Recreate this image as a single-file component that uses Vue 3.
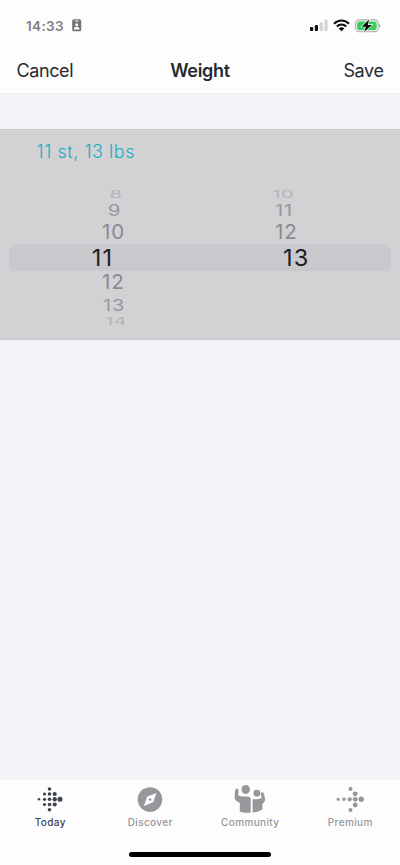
<script setup>
const wheels = [
  {
    name: 'stones',
    rows: [
      { value: 8, depth: 'd3', shift: 109.5 },
      { value: 9, depth: 'd2', shift: 108 },
      { value: 10, depth: 'd1', shift: 102 },
      { value: 11, depth: 'd0', shift: 91.7 },
      { value: 12, depth: 'd1', shift: 102 },
      { value: 13, depth: 'd2', shift: 103 },
      { value: 14, depth: 'd3', shift: 105 },
    ],
  },
  {
    name: 'pounds',
    rows: [
      { value: 10, depth: 'd3', shift: 72.5 },
      { value: 11, depth: 'd2', shift: 75 },
      { value: 12, depth: 'd1', shift: 75 },
      { value: 13, depth: 'd0', shift: 83 },
    ],
  },
]
const todayDots = [
  [12.5, 2, 1.8],
  [7.5, 7, 1.6], [12.5, 7, 1.8], [17.7, 7, 2.1],
  [2, 12.3, 1.3], [7.5, 12.3, 1.6], [12.5, 12.3, 1.8], [17.7, 12.3, 2.2], [23, 12.3, 2.5],
  [7.5, 17.5, 1.6], [12.5, 17.5, 1.8], [17.7, 17.5, 2.1],
  [12.5, 22.8, 1.8],
]
const premiumDots = [
  [15.5, 1.9, 2], [20.2, 6.8, 2.4],
  [3.2, 12.3, 1.6], [9, 12.3, 1.8], [14.7, 12.3, 2.1], [20.2, 12.3, 2.4], [26.2, 12.3, 2.7],
  [20.2, 18, 2.4], [15.5, 22.9, 2],
]
</script>

<template>
  <div class="screen">
    <div class="status">
      <span class="time">14:33</span>
      <svg class="badge" width="10" height="13" viewBox="0 0 10 13">
        <rect x="0.2" y="0.3" width="9" height="12" rx="1.6" fill="#737277" />
        <rect x="3" y="1.5" width="3.5" height="1" rx="0.5" fill="#fff" />
        <circle cx="4.7" cy="5.7" r="1.5" fill="#fff" />
        <path d="M1.8 10.6C1.8 8.6 3 7.8 4.7 7.8s2.9.8 2.9 2.8z" fill="#fff" />
      </svg>
      <div class="signals">
        <svg width="18" height="13" viewBox="0 0 18 13">
          <rect x="0" y="8" width="3.2" height="4" rx="0.9" fill="#111" />
          <rect x="4.8" y="6" width="3.2" height="6" rx="0.9" fill="#111" />
          <rect x="9.7" y="3.2" width="3.2" height="8.8" rx="0.9" fill="#d3d2d4" />
          <rect x="14.4" y="0.6" width="3.2" height="11.4" rx="0.9" fill="#d3d2d4" />
        </svg>
        <svg class="wifi" width="17" height="13" viewBox="0 0 17 13">
          <g fill="none" stroke="#0c0c0d" stroke-width="2.1">
            <path d="M1 4.7C5.2.4 11.8.4 16 4.7" />
            <path d="M3.8 7.5c2.7-2.6 6.7-2.6 9.4 0" />
          </g>
          <path d="M5.7 9.4c1.6-1.4 4-1.4 5.6 0L8.5 12.2z" fill="#0c0c0d" />
        </svg>
        <svg class="battery" width="27" height="14" viewBox="0 0 27 14">
          <rect x="0.6" y="0.9" width="22.6" height="11.8" rx="3.7" fill="#fff" stroke="#aaa8ad" stroke-width="1.1" />
          <rect x="2.1" y="2.4" width="19.6" height="8.8" rx="2.4" fill="#35cd5c" />
          <path d="M24.4 5v3.8c1.5-.7 1.5-3.1 0-3.8z" fill="#98969b" />
          <path d="M14.1.6L6.8 7.7h4l-1.6 5.4L17 5.9h-4.2z" fill="#080a08" stroke="#fff" stroke-width="1.2" paint-order="stroke" />
        </svg>
      </div>
    </div>

    <header class="nav">
      <button class="action cancel">Cancel</button>
      <h1>Weight</h1>
      <button class="action save">Save</button>
    </header>

    <main>
      <section class="panel">
        <p class="summary">11 st, 13 lbs</p>
        <div class="picker">
          <div class="band"></div>
          <div v-for="wheel in wheels" :key="wheel.name" class="wheel">
            <div v-for="row in wheel.rows" :key="row.value" class="row" :class="row.depth" :style="{ paddingLeft: row.shift + 'px' }">
              <span>{{ row.value }}</span>
            </div>
          </div>
        </div>
      </section>
    </main>

    <footer>
      <nav class="tabs">
        <div class="tab active">
          <svg width="26" height="26" viewBox="0 0 26 26" fill="currentColor">
            <circle v-for="(d, i) in todayDots" :key="i" :cx="d[0]" :cy="d[1]" :r="d[2]" />
          </svg>
          <span>Today</span>
        </div>
        <div class="tab">
          <svg width="26" height="26" viewBox="0 0 26 26">
            <circle cx="13" cy="12.5" r="12.3" fill="currentColor" />
            <path d="M19.5 6L16 15.3 6.8 18.9l3.5-9.3z" fill="#fff" />
            <circle cx="13.1" cy="12.5" r="1.3" fill="currentColor" />
          </svg>
          <span>Discover</span>
        </div>
        <div class="tab">
          <svg class="people" width="32" height="30" viewBox="0 0 32 30" fill="currentColor">
            <ellipse cx="11.7" cy="5.5" rx="4.2" ry="4.5" />
            <circle cx="22.9" cy="9.2" r="3.4" />
            <path d="M2.2 4.9c1.2-.4 2.4.2 2.3 1.4l-.4 5c1.5 1 3.3 1.2 6.2 1.2h3.2c2 0 3.2.9 3.2 2.8v13.1c-3.8.8-8.2.5-10.9-.9V18.8C2.6 17.5.5 15.8.6 12.9.7 9.8 1 7 1.4 5.7q.2-.6.8-.8z" />
            <path d="M18.6 15.2c2.8.3 6.8.1 9-1.5l-.8-3.9c-.3-1.6 2.1-2.3 2.8-.9l1.4 5.4c.5 2.2-.8 4.4-2.6 5.8v5.1c-2.1 1.8-5.8 3.2-9.8 3.2z" />
          </svg>
          <span>Community</span>
        </div>
        <div class="tab">
          <svg width="30" height="26" viewBox="0 0 30 26" fill="currentColor">
            <circle v-for="(d, i) in premiumDots" :key="i" :cx="d[0]" :cy="d[1]" :r="d[2]" />
          </svg>
          <span>Premium</span>
        </div>
      </nav>
      <div class="home"></div>
    </footer>
  </div>
</template>

<style>
body {
  margin: 0;
  background: #f5f3f7;
}
</style>

<style scoped>
.screen {
  display: flex;
  flex-direction: column;
  width: 400px;
  height: 865px;
  overflow: hidden;
  background: #f5f3f7;
  font-family: Inter, "Liberation Sans", sans-serif;
}
.status {
  display: flex;
  align-items: center;
  box-sizing: border-box;
  height: 50px;
  padding: 1px 18px 0 26px;
  background: #fefdfe;
}
.time {
  width: 38px;
  font-size: 13.5px;
  font-weight: 600;
  line-height: 18px;
  letter-spacing: 0.35px;
  color: #808084;
  white-space: nowrap;
}
.badge {
  margin-left: 8px;
}
.signals {
  display: flex;
  align-items: center;
  margin-left: auto;
}
.wifi {
  margin-left: 5px;
}
.battery {
  margin-left: 5px;
}
.nav {
  display: grid;
  grid-template-columns: 1fr auto 1fr;
  align-items: center;
  box-sizing: border-box;
  height: 44px;
  padding: 0 16px 2px;
  border-bottom: 1px solid #efedf1;
  background: #fefdfe;
  color: #262a30;
}
.action {
  padding: 0;
  border: 0;
  background: none;
  font: 400 18px/24px Inter, sans-serif;
  letter-spacing: -0.4px;
  color: inherit;
}
.cancel {
  padding-left: 0.5px;
  text-align: left;
}
.save {
  padding-right: 0.5px;
  text-align: right;
}
h1 {
  margin: 0;
  font-size: 18px;
  font-weight: 600;
  line-height: 24px;
  letter-spacing: -0.3px;
}
main {
  flex: 1;
  padding-top: 35px;
}
.panel {
  box-sizing: border-box;
  height: 211px;
  background: #d2d1d4;
  border-top: 1px solid #cac9cc;
  border-bottom: 1px solid #cac9cc;
}
.summary {
  margin: 0;
  padding: 10px 0 0 36.5px;
  font-size: 18px;
  font-weight: 300;
  line-height: 24px;
  letter-spacing: 0.55px;
  color: #12afc5;
}
.picker {
  position: relative;
  display: grid;
  grid-template-columns: 200px 200px;
  margin-top: 24px;
}
.band {
  position: absolute;
  top: 56px;
  left: 9px;
  right: 9px;
  height: 27px;
  border-radius: 7px;
  background: #c8c8cd;
}
.wheel {
  position: relative;
}
.row {
  display: flex;
  align-items: center;
}
.row span {
  display: block;
  line-height: 1;
  transform-origin: 0 50%;
}
.d0 {
  height: 27px;
  font-size: 23.5px;
  letter-spacing: 1.2px;
  color: #202022;
}
.d1 {
  height: 23.3px;
  font-size: 20.5px;
  letter-spacing: 0.8px;
  color: #8b8a8f;
}
.d2 {
  height: 20.7px;
  font-size: 20px;
  letter-spacing: 0.8px;
  color: #97969b;
}
.d2 span {
  transform: scaleY(0.79);
}
.d3 {
  height: 12px;
  font-size: 20px;
  letter-spacing: 0.3px;
  color: #b4b3b8;
}
.d3 span {
  transform: scaleY(0.52);
}
footer {
  height: 85px;
  background: #fefdfe;
}
.tabs {
  display: grid;
  grid-template-columns: repeat(4, 100px);
  height: 52px;
}
.tab {
  display: flex;
  flex-direction: column;
  align-items: center;
  padding-top: 7px;
  color: #98969a;
}
.tab span {
  margin-top: 2px;
  padding-left: 0.5px;
  font-size: 10px;
  font-weight: 500;
  line-height: 14px;
  letter-spacing: 0.38px;
}
.tab .people {
  margin: -3px 0 -1px;
}
.tab.active {
  color: #3e4350;
}
.home {
  width: 142px;
  height: 5px;
  margin: 20px auto 0;
  border-radius: 3px;
  background: #000;
}
</style>
